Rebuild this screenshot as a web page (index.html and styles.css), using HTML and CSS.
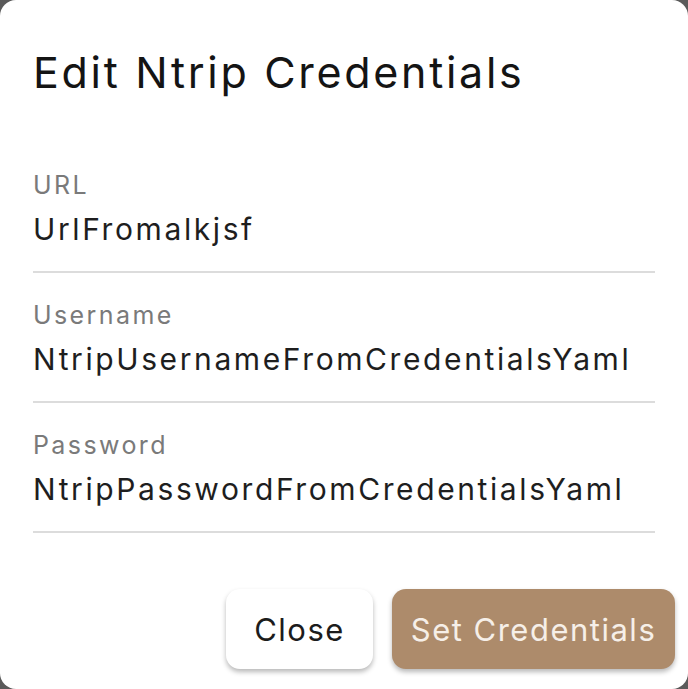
FILE: index.html
```html
<!DOCTYPE html>
<html lang="en">
<head>
<meta charset="utf-8">
<title>Edit Ntrip Credentials</title>
<link rel="stylesheet" href="styles.css">
</head>
<body>
<div class="dialog">
  <h1 class="title">Edit Ntrip Credentials</h1>
  <div class="fields">
    <div class="field">
      <div class="label">URL</div>
      <div class="value">UrlFromalkjsf</div>
    </div>
    <div class="field">
      <div class="label">Username</div>
      <div class="value">NtripUsernameFromCredentialsYaml</div>
    </div>
    <div class="field">
      <div class="label">Password</div>
      <div class="value">NtripPasswordFromCredentialsYaml</div>
    </div>
  </div>
  <div class="actions">
    <button class="btn btn-close">Close</button>
    <button class="btn btn-primary">Set Credentials</button>
  </div>
</div>
</body>
</html>
```

FILE: styles.css
```css
html, body {
  margin: 0;
  padding: 0;
  background: #5a5a5a;
}
body {
  width: 688px;
  height: 689px;
  overflow: hidden;
  font-family: "Inter", "Noto Sans", sans-serif;
}
.dialog {
  box-sizing: border-box;
  width: 688px;
  height: 689px;
  background: #ffffff;
  border-radius: 16px;
  padding: 46px 33px 20px 33px;
  display: flex;
  flex-direction: column;
}
.title {
  margin: 0;
  font-size: 43px;
  line-height: 52px;
  font-weight: 400;
  color: #141414;
  letter-spacing: 2.7px;
}
.fields {
  margin-top: 72px;
  display: flex;
  flex-direction: column;
}
.field {
  padding-top: 27px;
  padding-bottom: 22px;
  border-bottom: 2px solid #dcdcdc;
}
.field:first-child {
  padding-top: 0;
}
.label {
  font-size: 25px;
  line-height: 30px;
  color: #7a7a7a;
  margin-bottom: 9px;
  letter-spacing: 2.4px;
}
.value {
  font-size: 30px;
  line-height: 40px;
  color: #1e1e1e;
  letter-spacing: 2.6px;
  white-space: nowrap;
}
.actions {
  margin-top: auto;
  margin-right: -20px;
  display: flex;
  justify-content: flex-end;
  gap: 19px;
}
.btn {
  height: 80px;
  border: none;
  border-radius: 14px;
  font-family: inherit;
  font-size: 31px;
  letter-spacing: 1.5px;
  padding: 0;
  box-shadow: 0 3px 5px rgba(0, 0, 0, 0.28);
}
.btn-close {
  width: 147px;
  background: #ffffff;
  color: #1c1c1c;
}
.btn-primary {
  width: 283px;
  background: #ad8b6b;
  color: #f6efe8;
}
```
